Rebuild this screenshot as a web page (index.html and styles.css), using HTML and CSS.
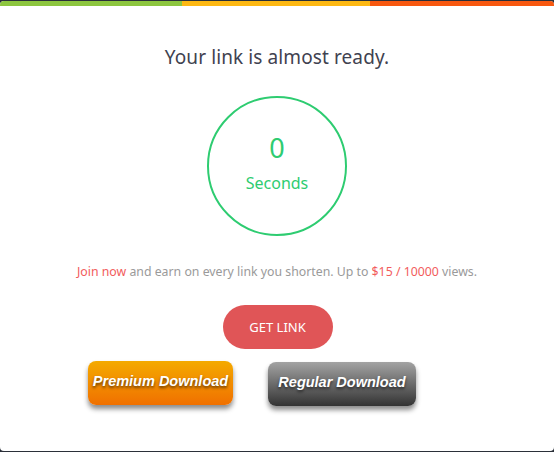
FILE: index.html
```html
<!DOCTYPE html>
<html lang="en">
<head>
<meta charset="UTF-8">
<meta name="viewport" content="width=device-width, initial-scale=1.0">
<title>Your link is almost ready</title>
<link rel="stylesheet" href="styles.css">
</head>
<body>
  <div class="link-box">
    <div class="top-bar">
      <span class="bar-green"></span>
      <span class="bar-yellow"></span>
      <span class="bar-orange"></span>
    </div>
    <h2 class="link-title">Your link is almost ready.</h2>
    <div class="timer">
      <span class="timer-count">0</span>
      <span class="timer-label">Seconds</span>
    </div>
    <p class="promo">
      <a href="#" class="red">Join now</a> and earn on every link you shorten. Up to <span class="red">$15 / 10000</span> views.
    </p>
    <div class="get-link-row">
      <a href="#" class="get-link-button">GET LINK</a>
    </div>
    <div class="download-row">
      <a href="#" class="download-button premium">Premium Download</a>
      <a href="#" class="download-button regular">Regular Download</a>
    </div>
  </div>
</body>
</html>
```

FILE: styles.css
```css
body {
  margin: 0;
  padding: 1px 0 0;
  background-color: #2b3039;
  font-family: "Noto Sans", Arial, sans-serif;
}
.link-box {
  height: 450px;
  background-color: #fff;
  border-radius: 4px;
  overflow: hidden;
}
.top-bar {
  display: flex;
  height: 5px;
}
.bar-green {
  width: 182px;
  background-color: #8dc63f;
}
.bar-yellow {
  width: 188px;
  background-color: #fdb813;
}
.bar-orange {
  flex: 1;
  background-color: #f7580f;
}
.link-title {
  margin: 38px 0 0;
  text-align: center;
  font-size: 19px;
  font-weight: normal;
  color: #3f4250;
  letter-spacing: 0.1px;
}
.timer {
  width: 136px;
  height: 136px;
  margin: 26px auto 0;
  border: 2px solid #2ecc71;
  border-radius: 50%;
  display: flex;
  flex-direction: column;
  align-items: center;
  justify-content: center;
  color: #2ecc71;
}
.timer-count {
  font-size: 27px;
  line-height: 32px;
  margin-top: -8px;
}
.timer-label {
  font-size: 16px;
  line-height: 20px;
  margin-top: 9px;
}
.promo {
  margin: 27px 0 0;
  text-align: center;
  font-size: 12.3px;
  color: #9a9a9a;
}
.red {
  color: #f25c5c;
  text-decoration: none;
}
.get-link-row {
  display: flex;
  justify-content: center;
  margin-top: 25px;
  padding-left: 1px;
}
.get-link-button {
  width: 110px;
  height: 44px;
  line-height: 44px;
  text-align: center;
  border-radius: 22px;
  background-color: #e05557;
  color: #fff;
  font-size: 13px;
  text-decoration: none;
}
.download-row {
  display: flex;
  gap: 35px;
  margin-top: 12px;
  padding-left: 88px;
}
.download-button {
  height: 44px;
  line-height: 40px;
  border-radius: 8px;
  color: #fff;
  text-align: center;
  font-family: "Liberation Sans", Arial, sans-serif;
  font-size: 14.5px;
  font-weight: bold;
  font-style: italic;
  text-decoration: none;
  text-shadow: 0 2px 3px rgba(0, 0, 0, 0.6);
  box-shadow: 0 4px 5px rgba(0, 0, 0, 0.45);
}
.premium {
  width: 145px;
  background: linear-gradient(#f4aa00, #f07000);
}
.regular {
  width: 148px;
  margin-top: 1px;
  background: linear-gradient(#a3a3a3, #333);
}
```
